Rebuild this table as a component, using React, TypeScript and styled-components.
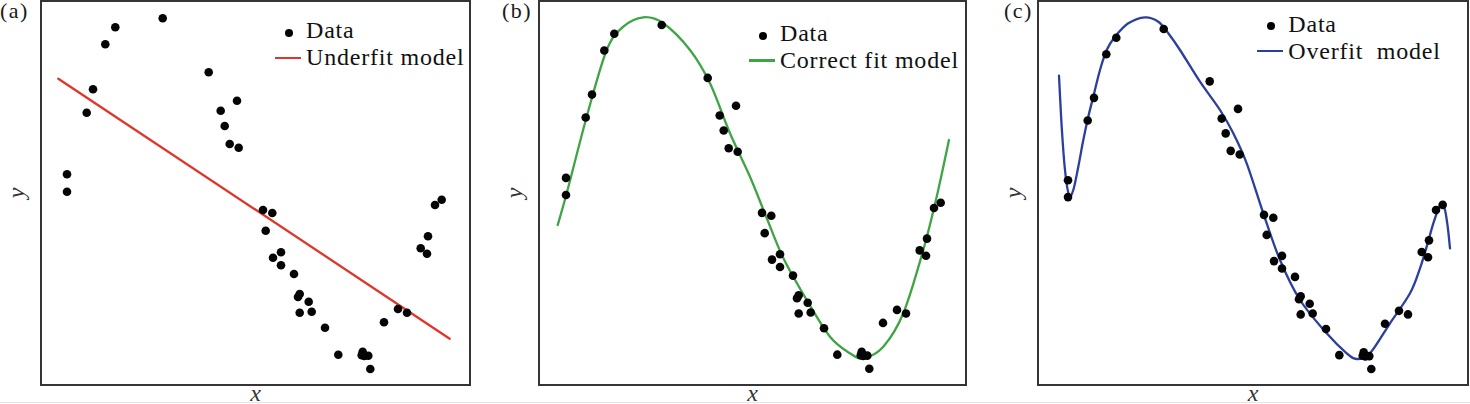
import React from "react";
import styled, { createGlobalStyle, css } from "styled-components";

type Pt = [number, number];

const serif = css`
  font-family: "Liberation Serif", "Times New Roman", Tinos, Times, serif;
`;

const GlobalStyle = createGlobalStyle`
  html, body {
    margin: 0;
    padding: 0;
    background: #ffffff;
  }
  body {
    font-family: "Liberation Serif", "Times New Roman", serif;
    color: #111;
  }
`;

const Figure = styled.div`
  display: flex;
  align-items: flex-start;
  width: 1470px;
  height: 403px;
  box-sizing: border-box;
  border-bottom: 1px solid #e4e4e4;
`;

const Panel = styled.div<{ $offset: number; $side: number; $plot: number }>`
  flex: none;
  display: grid;
  grid-template-columns: ${(p) => p.$side}px ${(p) => p.$plot}px;
  grid-template-rows: 386px 16px;
  margin-left: ${(p) => p.$offset}px;
`;

const Side = styled.div`
  grid-row: 1;
  grid-column: 1;
  display: grid;
`;

const PanelTag = styled.span`
  ${serif};
  grid-area: 1 / 1;
  align-self: start;
  justify-self: start;
  font-size: 22px;
  line-height: 22px;
  letter-spacing: 1.5px;
  color: #1a1a1a;
`;

const AxisY = styled.span`
  ${serif};
  grid-area: 1 / 1;
  align-self: center;
  justify-self: end;
  margin-right: 18px;
  font-style: italic;
  font-size: 24px;
  line-height: 24px;
  color: #333;
  transform: rotate(-90deg);
`;

const Frame = styled.div`
  grid-row: 1;
  grid-column: 2;
  position: relative;
  box-sizing: border-box;
  border: 2px solid #353535;
  background: #fff;
`;

const Plot = styled.svg`
  display: block;
  width: 100%;
  height: 100%;
`;

const AxisX = styled.span`
  ${serif};
  grid-row: 2;
  grid-column: 2;
  justify-self: center;
  align-self: start;
  font-style: italic;
  font-size: 24px;
  line-height: 14px;
  color: #333;
`;

const Legend = styled.div<{ $top: number; $left: number }>`
  position: absolute;
  top: ${(p) => p.$top}px;
  left: ${(p) => p.$left}px;
  display: grid;
  grid-template-columns: 31px auto;
  grid-auto-rows: 27px;
  align-items: start;
`;

const LegendDot = styled.span`
  display: block;
  width: 8px;
  height: 8px;
  margin: 11.6px 0 0 10px;
  border-radius: 50%;
  background: #000;
`;

const LegendLine = styled.span<{ $color: string }>`
  display: block;
  width: 26px;
  height: 2.4px;
  margin-top: 12.4px;
  background: ${(p) => p.$color};
`;

const LegendText = styled.span`
  ${serif};
  font-size: 24px;
  line-height: 27px;
  letter-spacing: 0.8px;
  white-space: pre;
  color: #111;
`;

const BASE: Pt[] = [
  [162.7, 18.3], [115.3, 27.3], [105.3, 44.3], [93, 89.3], [86.7, 112.7],
  [67, 174.3], [67, 191.7], [208.7, 72.3], [237, 100.7], [220.7, 110.7],
  [224.7, 126], [229.7, 144], [238.7, 147.7], [263, 210], [272.3, 213],
  [265.7, 230.7], [281, 252.3], [273, 257.7], [281, 265.3], [294, 274],
  [299.7, 294], [298, 297], [308.7, 301.7], [299.7, 312.7], [311.7, 311.7],
  [325, 327.7], [338.3, 354.7], [362.7, 351.7], [364.3, 356], [368.3, 355.7],
  [361.7, 355.3], [370.3, 369], [384, 322.3], [398, 309], [407, 312.7],
  [420.7, 248.3], [428, 236.3], [427, 253.7], [435, 205], [441.7, 199.7],
];

const GREEN: Pt[] = [
  [557.7, 225], [566.7, 193.3], [586.7, 116.7], [606.7, 50], [623.3, 26.7],
  [643.3, 17.3], [663.3, 23.3], [690, 50], [710, 83.3], [730, 133.3],
  [750, 176.7], [766.7, 218], [783.3, 258], [806.7, 300], [830, 336.7],
  [850, 353.3], [863.3, 358.3], [883.3, 346.7], [903.3, 313.3], [923.3, 250],
  [936.7, 196.7], [949, 140],
];

const BLUE: Pt[] = [
  [1059, 75.7], [1061.7, 126.7], [1065, 170], [1069, 195], [1073.3, 190],
  [1078.3, 166.7], [1083.3, 140], [1088.3, 116.7], [1093.3, 96.7], [1100, 70],
  [1106.7, 50], [1115, 36.7], [1128.3, 23.3], [1145, 17.3], [1158.3, 21.7],
  [1168.3, 33.3], [1180, 50], [1200, 81.7], [1220, 110], [1233.3, 133.3],
  [1246.7, 163.3], [1263.3, 213.3], [1280, 260], [1300, 300], [1326.7, 333.3],
  [1346.7, 353.3], [1356.7, 359], [1370, 353.3], [1390, 323.3], [1410, 293.3],
  [1420, 268.3], [1426.7, 246.7], [1433.3, 223.3], [1439.3, 206.7],
  [1441.7, 203.3], [1445, 210], [1447.7, 226.7], [1450, 248.3],
];

const smooth = (pts: Pt[]): string => {
  let d = `M${pts[0][0]},${pts[0][1]}`;
  for (let i = 0; i < pts.length - 1; i++) {
    const p0 = pts[i - 1] || pts[i];
    const p1 = pts[i];
    const p2 = pts[i + 1];
    const p3 = pts[i + 2] || p2;
    const c1x = p1[0] + (p2[0] - p0[0]) / 6;
    const c1y = p1[1] + (p2[1] - p0[1]) / 6;
    const c2x = p2[0] - (p3[0] - p1[0]) / 6;
    const c2y = p2[1] - (p3[1] - p1[1]) / 6;
    d += ` C${c1x.toFixed(2)},${c1y.toFixed(2)} ${c2x.toFixed(2)},${c2y.toFixed(2)} ${p2[0]},${p2[1]}`;
  }
  return d;
};

type PanelSpec = {
  tag: string;
  offset: number;
  side: number;
  plot: number;
  frameLeft: number;
  dx: number;
  y0: number;
  scale: number;
  color: string;
  model: string;
  curve: string;
  legendTop: number;
  legendLeft: number;
};

const PANELS: PanelSpec[] = [
  {
    tag: "(a)", offset: 0, side: 40, plot: 431, frameLeft: 40,
    dx: 0, y0: 18.3, scale: 1, color: "#e0352b", model: "Underfit model",
    curve: "M58.3,78.7 L449.7,338.7", legendTop: 15.4, legendLeft: 233,
  },
  {
    tag: "(b)", offset: 31, side: 36, plot: 429, frameLeft: 538,
    dx: 499, y0: 25, scale: 0.98, color: "#3ea444", model: "Correct fit model",
    curve: smooth(GREEN), legendTop: 18, legendLeft: 209,
  },
  {
    tag: "(c)", offset: 37, side: 33, plot: 432, frameLeft: 1037,
    dx: 1001, y0: 29, scale: 0.9695, color: "#2b3f9c", model: "Overfit  model",
    curve: smooth(BLUE), legendTop: 8.7, legendLeft: 218.3,
  },
];

const FitPanel: React.FC<{ spec: PanelSpec }> = ({ spec }) => {
  const left = spec.frameLeft + 2;
  const width = spec.plot - 4;
  const dots = BASE.map(([x, y]) => [x + spec.dx, spec.y0 + (y - 18.3) * spec.scale] as Pt);
  return (
    <Panel $offset={spec.offset} $side={spec.side} $plot={spec.plot}>
      <Side>
        <PanelTag>{spec.tag}</PanelTag>
        <AxisY>y</AxisY>
      </Side>
      <Frame>
        <Plot viewBox={`${left} 2 ${width} 382`} preserveAspectRatio="none">
          <path d={spec.curve} fill="none" stroke={spec.color} strokeWidth={2.3} strokeLinecap="round" strokeLinejoin="round" />
          {dots.map(([x, y], i) => (
            <circle key={i} cx={x} cy={y} r={4.3} fill="#050505" />
          ))}
        </Plot>
        <Legend $top={spec.legendTop} $left={spec.legendLeft}>
          <LegendDot />
          <LegendText>Data</LegendText>
          <LegendLine $color={spec.color} />
          <LegendText>{spec.model}</LegendText>
        </Legend>
      </Frame>
      <AxisX>x</AxisX>
    </Panel>
  );
};

export default function App() {
  return (
    <>
      <GlobalStyle />
      <Figure>
        {PANELS.map((p) => (
          <FitPanel key={p.tag} spec={p} />
        ))}
      </Figure>
    </>
  );
}
